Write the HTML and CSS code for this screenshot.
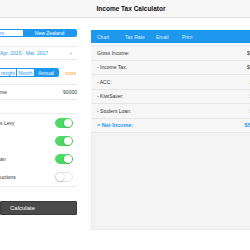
FILE: index.html
```html
<!DOCTYPE html>
<html lang="en">
<head>
  <meta charset="UTF-8">
  <meta name="viewport" content="width=device-width, initial-scale=1.0">
  <title>Income Tax Calculator</title>
  <link rel="stylesheet" href="styles.css">
</head>
<body>

  <!-- Header -->
  <div class="header">
    <h1>Income Tax Calculator</h1>
  </div>

  <div class="main">
    <!-- Input form -->
    <div class="side">
      <div class="seg country">
        <span class="seg-item">m</span>
        <span class="seg-item active">New Zealand</span>
      </div>

      <div class="row date">
        <span>Apr. 2016 - Mar. 2017</span>
        <span class="chevron">&rsaquo;</span>
      </div>

      <div class="period">
        <div class="seg">
          <span class="seg-item first">rtnight</span>
          <span class="seg-item second">Month</span>
          <span class="seg-item third active">Annual</span>
        </div>
        <span class="more">more</span>
      </div>

      <div class="row income">
        <span>me</span>
        <span>90000</span>
      </div>

      <div class="switches">
        <div class="switch-row"><span>s Levy</span><span class="toggle on"></span></div>
        <div class="switch-row"><span></span><span class="toggle on"></span></div>
        <div class="switch-row"><span>an</span><span class="toggle on"></span></div>
        <div class="switch-row"><span>uctions</span><span class="toggle"></span></div>
      </div>

      <button class="calc">Calculate</button>
    </div>

    <!-- Results -->
    <div class="result">
      <div class="tabs">
        <span class="tab">Chart</span>
        <span class="tab">Tax Rate</span>
        <span class="tab">Email</span>
        <span class="tab">Print</span>
      </div>

      <div class="lines">
        <div class="line"><span>Gross Income:</span><span>$90,000.00</span></div>
        <div class="line"><span>- Income Tax:</span><span>$20,620.00</span></div>
        <div class="line"><span>- ACC:</span><span>$1,251.00</span></div>
        <div class="line"><span>- KiwiSaver:</span><span>$2,700.00</span></div>
        <div class="line"><span>- Student Loan:</span><span>$8,509.92</span></div>
        <div class="line net"><span>= Net Income:</span><span>$56,919.08</span></div>
      </div>

      <div class="chart">
        <div class="chart-inner"></div>
      </div>
    </div>
  </div>

</body>
</html>
```

FILE: styles.css
```css
* {
  margin: 0;
  padding: 0;
  box-sizing: border-box;
}

html,
body {
  width: 250px;
  height: 250px;
  overflow: hidden;
}

body {
  font-family: 'Liberation Sans', Arial, sans-serif;
  font-size: 5px;
  color: #333;
  background-color: #fff;
}

/* Header */
.header {
  height: 18px;
  padding-left: 12px;
  display: flex;
  align-items: center;
  justify-content: center;
  background-color: #f7f7f7;
  border-bottom: 1px solid #e2e2e2;
}

.header h1 {
  font-size: 6.5px;
  font-weight: bold;
  color: #111;
}

.main {
  width: 280px;
  display: grid;
  grid-template-columns: 77px 1fr;
  column-gap: 14px;
  padding-top: 11px;
}

/* Left side */
.seg {
  display: flex;
  border: 1px solid #1e98ee;
  border-left: none;
  border-radius: 0 2px 2px 0;
  color: #1e98ee;
}

.seg-item {
  display: flex;
  align-items: center;
  justify-content: center;
}

.seg-item.active {
  background-color: #1e98ee;
  color: #fff;
}

.country {
  height: 8px;
}

.country .seg-item:first-child {
  width: 23px;
  justify-content: flex-start;
}

.country .seg-item.active {
  flex: 1;
}

.row {
  display: flex;
  align-items: center;
  justify-content: space-between;
  border-top: 1px solid #ececec;
  border-bottom: 1px solid #ececec;
}

.date {
  height: 14px;
  margin-top: 9px;
  padding-right: 5px;
  color: #1e98ee;
}

.chevron {
  color: #b5b5b5;
  font-size: 7px;
}

.period {
  display: flex;
  align-items: center;
  margin-top: 8px;
}

.period .seg {
  height: 9px;
}

.period .first {
  width: 17px;
  border-right: 1px solid #1e98ee;
}

.period .second {
  width: 17px;
}

.period .third {
  width: 24px;
}

.more {
  margin-left: 6px;
  color: #f5a623;
}

.income {
  height: 16px;
  margin-top: 7px;
}

.switches {
  margin-top: 13px;
  border-top: 1px solid #ececec;
  border-bottom: 1px solid #ececec;
}

.switch-row {
  height: 18px;
  display: flex;
  align-items: center;
  justify-content: space-between;
  padding-right: 4px;
}

.toggle {
  position: relative;
  width: 18px;
  height: 10px;
  border-radius: 5px;
  background-color: #fff;
  border: 1px solid #e4e4e4;
}

.toggle::after {
  content: '';
  position: absolute;
  top: 0;
  left: 0;
  width: 8px;
  height: 8px;
  border-radius: 50%;
  background-color: #fff;
  box-shadow: 0 0.5px 1.5px rgba(0, 0, 0, 0.35);
}

.toggle.on {
  background-color: #4cd964;
  border-color: #4cd964;
}

.toggle.on::after {
  left: auto;
  right: 0;
}

.calc {
  width: 77px;
  height: 14px;
  margin-top: 14px;
  padding-left: 9px;
  text-align: left;
  font-family: inherit;
  font-size: 6px;
  color: #fff;
  background-color: #4a4a4a;
  border: 1px solid #3a3a3a;
  border-radius: 1px;
}

/* Right side */
.result {
  margin-top: 1px;
}

.tabs {
  height: 13px;
  display: grid;
  grid-template-columns: 28px 31px 26px auto;
  align-items: center;
  padding-left: 6px;
  background-color: #1e98ee;
}

.tab {
  color: rgba(255, 255, 255, 0.85);
}

.lines {
  margin-top: 2px;
  background-color: #f6f6f6;
  border-top: 1px solid #e6e6e6;
}

.line {
  height: 14.5px;
  display: flex;
  align-items: center;
  justify-content: space-between;
  padding: 0 8px 0 6px;
  border-bottom: 1px solid #e6e6e6;
}

.net {
  color: #1e98ee;
  font-weight: bold;
  font-size: 5.5px;
}

.chart {
  height: 97px;
  padding: 2px;
  background-color: #f4f4f4;
  border: 1px solid #ebebeb;
  border-top: none;
}

.chart-inner {
  height: 100%;
  background-color: #f5f5f5;
  border: 1px solid #efefef;
}
```
